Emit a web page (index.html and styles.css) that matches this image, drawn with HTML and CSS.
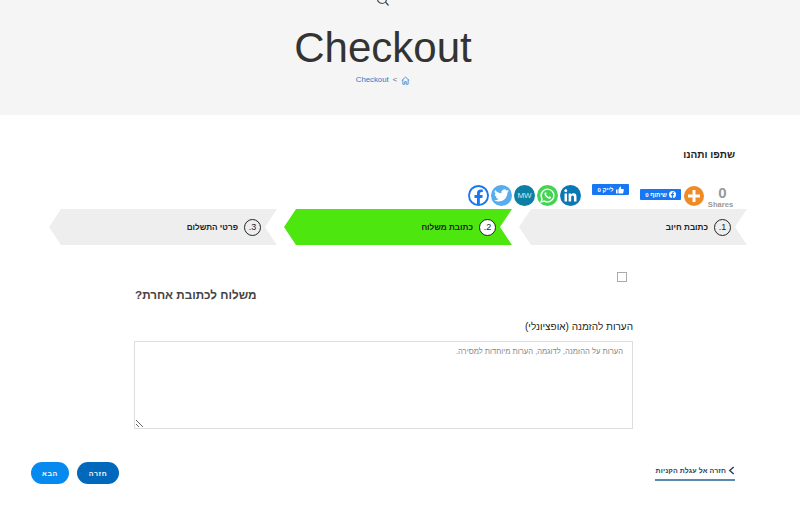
FILE: index.html
```html
<!DOCTYPE html>
<html lang="he" dir="rtl">
<head>
    <meta charset="UTF-8">
    <title>Checkout</title>
    <link rel="stylesheet" href="styles.css">
</head>
<body>
    <header class="page-head">
        <svg class="search-icon" viewBox="0 0 14 6" width="14" height="6" fill="none" stroke="#3b4a5c" stroke-width="1.2">
            <circle cx="6" cy="-1" r="4.5"/>
            <path d="M9.5 2 L12.5 5.5"/>
        </svg>
        <h1 class="page-title">Checkout</h1>
        <nav class="crumbs">
            <svg viewBox="0 0 12 12" width="9" height="9" fill="none" stroke="#1f7ad0" stroke-width="1">
                <path d="M1 6 L6 1.5 L11 6 M2.5 5 V11 H5 V7.5 H7 V11 H9.5 V5"/>
            </svg>
            <span class="crumb-sep">&gt;</span>
            <a class="crumb-link">Checkout</a>
        </nav>
    </header>

    <section class="share">
        <div class="share-title">שתפו ותהנו</div>
        <div class="share-row">
            <div class="share-count">
                <span class="share-num">0</span>
                <span class="share-label">Shares</span>
            </div>
            <span class="share-plus">
                <svg viewBox="0 0 20 20" width="20" height="20" fill="none" stroke="#fff" stroke-width="3"><path d="M10 4 V16 M4 10 H16"/></svg>
            </span>
            <span class="fb-btn fb-share">
                <svg viewBox="0 0 10 10" width="7" height="7"><circle cx="5" cy="5" r="5" fill="#fff"/><path d="M5.6 10 V6 H7 L7.2 4.4 H5.6 V3.6 Q5.6 3 6.3 3 H7.2 V1.7 H6 Q4.1 1.7 4.1 3.5 V4.4 H2.8 V6 H4.1 V10 Z" fill="#1877f2"/></svg>
                שיתוף 0
            </span>
            <span class="fb-btn fb-like">
                <svg viewBox="0 0 10 10" width="8" height="8" fill="#fff"><path d="M0 4.5 H2 V9.5 H0 Z M3 4.5 L5 0.5 Q6.5 0.5 6.2 2.2 L6 3.6 H9 Q10 3.6 9.8 4.6 L9 8.6 Q8.8 9.5 8 9.5 H3 Z"/></svg>
                לייק 0
            </span>
            <div class="share-icons">
                <span class="share-icon ic-linkedin">
                    <svg viewBox="0 0 24 24" width="17" height="17" fill="#fff"><path d="M20.447 20.452h-3.554v-5.569c0-1.328-.027-3.037-1.852-3.037-1.853 0-2.136 1.445-2.136 2.939v5.667H9.351V9h3.414v1.561h.046c.477-.9 1.637-1.85 3.37-1.85 3.601 0 4.267 2.37 4.267 5.455v6.286zM5.337 7.433c-1.144 0-2.063-.926-2.063-2.065 0-1.138.92-2.063 2.063-2.063 1.14 0 2.064.925 2.064 2.063 0 1.139-.925 2.065-2.064 2.065zm1.782 13.019H3.555V9h3.564v11.452z"/></svg>
                </span>
                <span class="share-icon ic-whatsapp">
                    <svg viewBox="0 0 24 24" width="17" height="17"><path d="M12 3 A9 9 0 0 0 4.3 16.6 L3 21 L7.6 19.8 A9 9 0 1 0 12 3 Z" fill="none" stroke="#fff" stroke-width="2"/><path d="M8.6 7.6 Q7.2 9 7.8 11 Q9.4 15.2 13.8 16.6 Q15.8 17 17 15.4 L16.8 14 L14.6 13 L13.6 14.2 Q11 13 9.9 10.6 L10.8 9.4 L9.9 7.4 Z" fill="#fff"/></svg>
                </span>
                <span class="share-icon ic-mix">MW</span>
                <span class="share-icon ic-twitter">
                    <svg viewBox="0 0 24 24" width="15" height="15" fill="#fff"><path d="M23.953 4.57a10 10 0 01-2.825.775 4.958 4.958 0 002.163-2.723c-.951.555-2.005.959-3.127 1.184a4.92 4.92 0 00-8.384 4.482C7.69 8.095 4.067 6.13 1.64 3.162a4.822 4.822 0 00-.666 2.475c0 1.71.87 3.213 2.188 4.096a4.904 4.904 0 01-2.228-.616v.06a4.923 4.923 0 003.946 4.827 4.996 4.996 0 01-2.212.085 4.936 4.936 0 004.604 3.417 9.867 9.867 0 01-6.102 2.105c-.39 0-.779-.023-1.17-.067a13.995 13.995 0 007.557 2.209c9.053 0 13.998-7.496 13.998-13.985 0-.21 0-.42-.015-.63A9.935 9.935 0 0024 4.59z"/></svg>
                </span>
                <span class="share-icon ic-facebook">
                    <svg viewBox="0 0 22 22" width="21" height="21"><circle cx="11" cy="11" r="9" fill="#fff"/><path d="M12.4 20 V13.6 H15 L15.4 10.6 H12.4 V9 Q12.4 7.4 14 7.4 H15.5 V4.8 L13.4 4.6 Q9.4 4.6 9.4 8.6 V10.6 H6.8 V13.6 H9.4 V20 Z" fill="#1877f2"/></svg>
                </span>
            </div>
        </div>
    </section>

    <ol class="steps">
        <li class="step"><span class="step-num">1.</span>כתובת חיוב</li>
        <li class="step step-active"><span class="step-num">2.</span>כתובת משלוח</li>
        <li class="step"><span class="step-num">3.</span>פרטי התשלום</li>
    </ol>

    <form class="checkout-form">
        <label class="ship-other">
            <input type="checkbox" class="ship-check">
            <span class="ship-title">משלוח לכתובת אחרת?</span>
        </label>
        <label class="notes-label" for="order-notes">הערות להזמנה (אופציונלי)</label>
        <textarea id="order-notes" class="notes" placeholder="הערות על ההזמנה, לדוגמה, הערות מיוחדות למסירה."></textarea>
    </form>

    <div class="form-nav">
        <a class="back-link">
            <svg viewBox="0 0 8 10" width="7" height="9" fill="none" stroke="#1d3f5e" stroke-width="1.6"><path d="M6.5 1 L2 5 L6.5 9"/></svg>
            חזרה אל עגלת הקניות
        </a>
        <div class="nav-buttons">
            <button type="button" class="btn btn-prev">חזרה</button>
            <button type="button" class="btn btn-next">הבא</button>
        </div>
    </div>
</body>
</html>
```

FILE: styles.css
```css
* {
    box-sizing: border-box;
}

body {
    margin: 0;
    font-family: "Liberation Sans", Arial, sans-serif;
    background: #fff;
    color: #222;
}

.page-head {
    height: 115px;
    padding-right: 34px;
    background: #f5f5f5;
    display: flex;
    flex-direction: column;
    align-items: center;
}

.search-icon {
    display: block;
}

.page-title {
    margin: 17px 0 0;
    font-size: 42px;
    font-weight: 400;
    line-height: 50px;
    color: #333;
}

.crumbs {
    display: flex;
    align-items: center;
    gap: 4px;
    margin-top: 2px;
    font-size: 7.8px;
    color: #1f7ad0;
    line-height: 10px;
}

.crumb-sep {
    color: #666;
}

.share {
    padding: 34px 65px 0 0;
}

.share-title {
    font-size: 10px;
    font-weight: 700;
    line-height: 12px;
    color: #222;
}

.share-row {
    display: flex;
    align-items: flex-start;
    margin-top: 23px;
    height: 38px;
    padding-right: 2px;
}

.share-count {
    width: 25px;
    display: flex;
    flex-direction: column;
    align-items: center;
    margin-top: 3px;
    color: #999;
}

.share-num {
    margin-right: -4px;
    font-size: 15px;
    font-weight: 700;
    line-height: 12px;
}

.share-label {
    font-size: 7.6px;
    font-weight: 700;
    line-height: 9px;
    margin-top: 1px;
}

.share-plus {
    width: 20px;
    height: 20px;
    border-radius: 50%;
    background: #f08a24;
    margin: 2px 4px 0 0;
    display: flex;
}

.fb-btn {
    display: flex;
    align-items: center;
    justify-content: center;
    gap: 2px;
    height: 11px;
    border-radius: 1px;
    background: #1877f2;
    color: #fff;
    font-size: 6px;
    font-weight: 700;
}

.fb-share {
    width: 41px;
    margin: 5px 3px 0 0;
}

.fb-like {
    width: 37px;
    margin: 0 11px 0 0;
}

.share-icons {
    display: flex;
    gap: 2px;
    margin: 1px 11px 0 0;
}

.share-icon {
    width: 21px;
    height: 21px;
    border-radius: 50%;
    display: flex;
    align-items: center;
    justify-content: center;
    color: #fff;
}

.ic-linkedin {
    background: #0a78b5;
}

.ic-whatsapp {
    background: #45d354;
}

.ic-mix {
    background: #0d7fa5;
    font-size: 8px;
    color: #cfe8f0;
}

.ic-twitter {
    background: #55acee;
}

.ic-facebook {
    background: #1877f2;
}

.steps {
    list-style: none;
    display: flex;
    gap: 7px;
    margin: -13px 0 0;
    padding: 0 53px 0 49px;
}

.step {
    width: 228px;
    height: 36px;
    padding-right: 16px;
    display: flex;
    align-items: center;
    gap: 6px;
    background: #eee;
    font-size: 8.2px;
    font-weight: 700;
    color: #222;
    clip-path: polygon(12px 0, 228px 0, 216px 18px, 228px 36px, 12px 36px, 0 18px);
}

.step-active {
    background: #4de60f;
}

.step-num {
    width: 17px;
    height: 17px;
    border: 1px solid #222;
    border-radius: 50%;
    background: transparent;
    display: flex;
    align-items: center;
    justify-content: center;
    font-weight: 400;
    font-size: 9px;
}

.step-active .step-num {
    background: #fff;
}

.checkout-form {
    padding: 0 167px 0 134px;
}

.ship-other {
    display: block;
    padding-top: 27px;
}

.ship-check {
    appearance: none;
    display: block;
    width: 10px;
    height: 10px;
    margin: 0 6px 0 0;
    border: 1px solid #aaa;
    background: #fff;
}

.ship-title {
    display: block;
    margin-top: 5px;
    padding-left: 1px;
    text-align: left;
    font-size: 11.7px;
    line-height: 16px;
    font-weight: 700;
    color: #444;
}

.notes-label {
    display: block;
    margin-top: 17px;
    font-size: 10px;
    line-height: 14px;
    color: #222;
}

.notes {
    display: block;
    width: 499px;
    height: 88px;
    margin-top: 7px;
    padding: 5px 9px;
    border: 1px solid #ddd;
    font-family: inherit;
    font-size: 7.6px;
    outline: none;
}

.notes::placeholder {
    color: #888;
}

.form-nav {
    display: flex;
    justify-content: space-between;
    align-items: center;
    padding: 0 65px 0 31px;
    margin-top: 33px;
}

.back-link {
    display: flex;
    align-items: center;
    gap: 2px;
    width: 80px;
    height: 16px;
    padding-bottom: 4px;
    border-bottom: 2px solid #5d88ad;
    font-size: 7px;
    font-weight: 700;
    letter-spacing: 0.1px;
    color: #1d3f5e;
    white-space: nowrap;
}

.back-link svg {
    flex-shrink: 0;
}

.nav-buttons {
    display: flex;
    gap: 8px;
}

.btn {
    height: 22px;
    border: none;
    border-radius: 11px;
    color: #fff;
    font-family: inherit;
    font-size: 7px;
    font-weight: 700;
    letter-spacing: 0.6px;
}

.btn-prev {
    width: 42px;
    background: #0268bb;
}

.btn-next {
    width: 38px;
    background: #068af0;
}
```
